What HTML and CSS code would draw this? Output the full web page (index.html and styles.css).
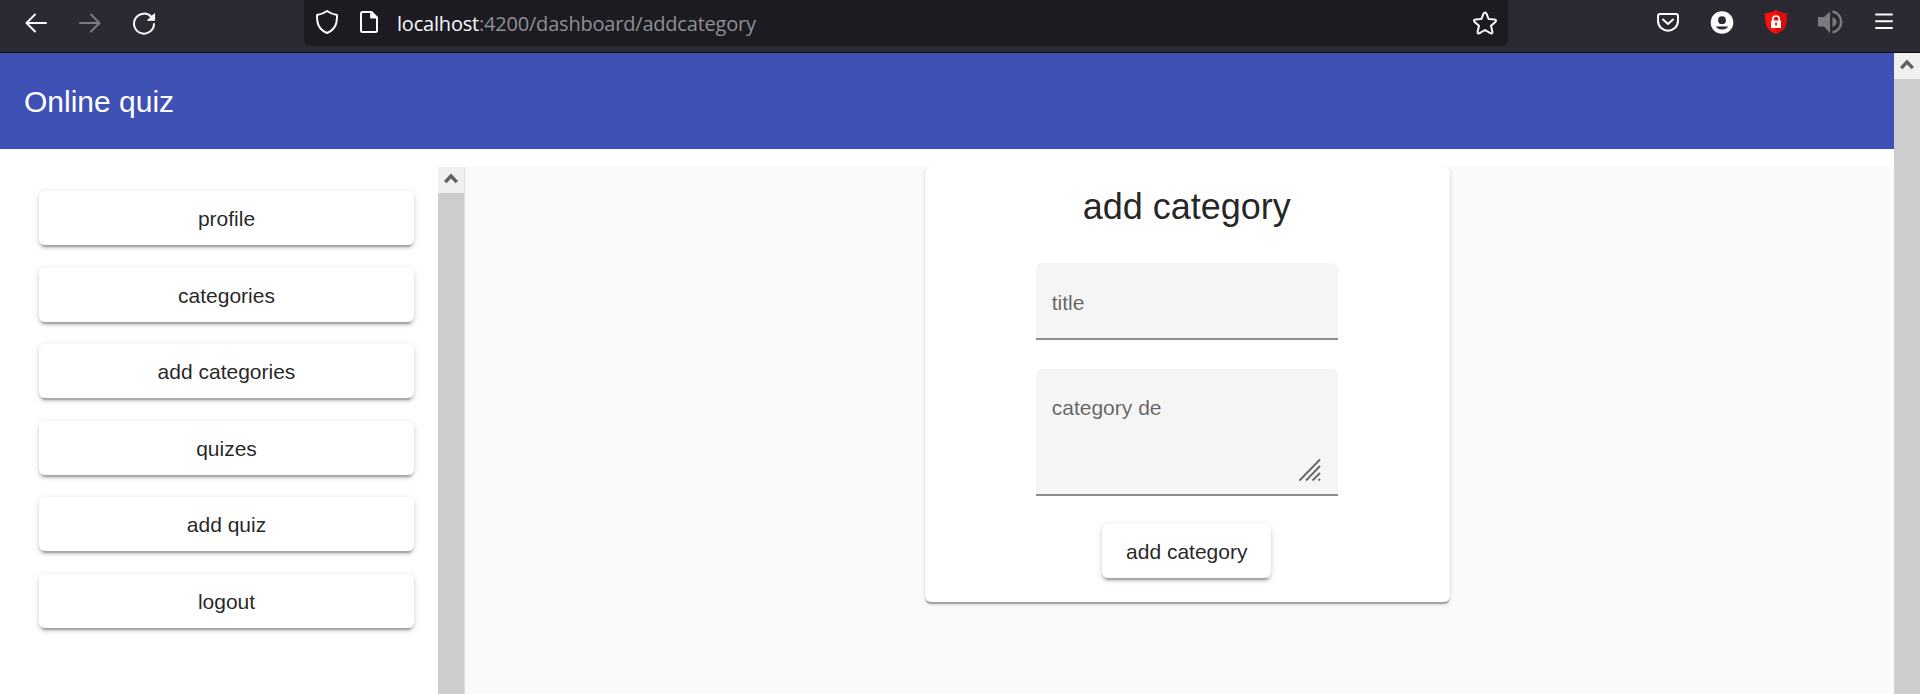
FILE: index.html
```
<!DOCTYPE html>
<html lang="en">
<head>
<meta charset="utf-8">
<title>Online quiz</title>
<link rel="stylesheet" href="styles.css">
</head>
<body>
<div class="browser">
  <div class="nav">
    <svg class="icon" width="24" height="24" viewBox="0 0 24 24"><path d="M22 12H3M11 3.500L2.500 12L11 20.500"/></svg>
    <svg class="icon icon-off" width="24" height="24" viewBox="0 0 24 24"><path d="M2 12H21M13 3.500L21.500 12L13 20.500"/></svg>
    <svg class="icon" width="24" height="24" viewBox="0 0 24 24"><path d="M19.500 6A10 10 0 1 0 22 13"/><path class="solid" d="M22.600 3V9.300H15.800Z"/></svg>
  </div>
  <div class="urlbar">
    <svg class="icon" width="24" height="26" viewBox="0 0 24 26"><path d="M12 2C9 4.200 5.500 5.400 2 6C1.800 14.500 3.500 20 12 24C20.500 20 22.200 14.500 22 6C18.500 5.400 15 4.200 12 2Z"/></svg>
    <svg class="icon" width="20" height="24" viewBox="0 0 20 24"><path d="M12.500 2H3.500Q2 2 2 3.500V20.500Q2 22 3.500 22H16.500Q18 22 18 20.500V7.500Z"/><path class="solid" d="M12 2L18 8H12Z"/></svg>
    <div class="url"><span class="host">localhost</span>:4200/dashboard/addcategory</div>
    <svg class="icon star" width="26" height="26" viewBox="0 0 26 26"><path d="M13 2.500C13.800 2.500 14.200 3 14.500 3.700L16.600 9L22.600 9.400C24.200 9.500 24.500 10.900 23.400 11.900L19 15.800L20.400 21.700C20.700 23.300 19.600 23.900 18.300 23.200L13 20L7.700 23.200C6.400 23.900 5.300 23.300 5.600 21.700L7 15.800L2.600 11.900C1.500 10.900 1.800 9.500 3.400 9.400L9.400 9L11.500 3.700C11.800 3 12.200 2.500 13 2.500Z"/></svg>
  </div>
  <div class="tools">
    <svg class="icon" width="24" height="24" viewBox="0 0 24 24"><path d="M4 4H20Q22 4 22 6V10.500C22 24 2 24 2 10.500V6Q2 4 4 4Z"/><path d="M7 9.500L12 14L17 9.500"/></svg>
    <svg width="24" height="24" viewBox="0 0 24 24"><circle cx="12" cy="12.500" r="11.300" fill="#fbfbfe"/><circle cx="12" cy="10.200" r="3.900" fill="#2b2a33"/><path d="M6 16.500H18C17 20.500 7 20.500 6 16.500Z" fill="#2b2a33"/></svg>
    <svg width="24" height="26" viewBox="0 0 24 26"><path d="M12 0C15 2.200 19 3 23 3.300C23 15 22 20 12 24C2 20 1 15 1 3.300C5 3 9 2.200 12 0Z" fill="#fc1010"/><path d="M12 0C15 2.200 19 3 23 3.300C23 15 22 20 12 24Z" fill="#dd0c0c"/><path d="M8.800 11V9C8.800 5 15.200 5 15.200 9V11" fill="none" stroke="#fff" stroke-width="1.700"/><rect x="7" y="10.500" width="10" height="7.500" rx=".5" fill="#fff"/><path d="M12 12.500V15.500" stroke="#ea1515" stroke-width="1.800"/></svg>
    <svg width="26" height="26" viewBox="0 0 26 26"><path d="M0 7H6L12 1.500V23L6 16.500H0Z" fill="#7b7b7f"/><path d="M14.500 7Q18.500 8.500 18.500 12T14.500 17Z" fill="#7b7b7f"/><path d="M14.500 1.500C26 4 26 20 14.500 22.500" fill="none" stroke="#7b7b7f" stroke-width="2.600"/></svg>
    <svg class="icon" width="20" height="24" viewBox="0 0 20 24"><path d="M2 4.600H18M2 11.300H18M2 17.900H18"/></svg>
  </div>
</div>
<div class="viewport">
  <div class="page">
    <header class="toolbar">Online quiz</header>
    <div class="body">
      <nav class="sidebar">
        <button class="btn">profile</button>
        <button class="btn">categories</button>
        <button class="btn">add categories</button>
        <button class="btn">quizes</button>
        <button class="btn">add quiz</button>
        <button class="btn">logout</button>
      </nav>
      <div class="scrollbar"><div class="scroll-up"><svg width="14" height="11" viewBox="0 0 14 11"><path d="M1.200 9.200L7 3L12.800 9.200" fill="none" stroke="#606060" stroke-width="3.300"/></svg></div></div>
      <main class="content">
        <section class="card">
          <h1 class="title">add category</h1>
          <div class="field">title</div>
          <div class="field field-area">category de
            <svg class="grip" width="24" height="24" viewBox="0 0 24 24"><path d="M1.500 22.500L22 1.500M8 22.500L22 8M14.500 22.500L22 15M20.500 22.500L22 21"/></svg>
          </div>
          <button class="btn">add category</button>
        </section>
      </main>
    </div>
  </div>
  <div class="scrollbar"><div class="scroll-up"><svg width="14" height="11" viewBox="0 0 14 11"><path d="M1.200 9.200L7 3L12.800 9.200" fill="none" stroke="#606060" stroke-width="3.300"/></svg></div></div>
</div>
</body>
</html>
```
FILE: styles.css
```
* { box-sizing: border-box; }
body {
  margin: 0;
  height: 694px;
  overflow: hidden;
  display: flex;
  flex-direction: column;
  font-family: "Liberation Sans", Arial, sans-serif;
  font-size: 21px;
  color: rgba(0, 0, 0, .87);
  background: #fff;
}
svg { display: block; flex: none; }
.browser {
  height: 53px;
  flex: none;
  display: flex;
  background: #2b2a33;
  border-bottom: 1px solid #0c0c0d;
}
.icon { fill: none; stroke: #fbfbfe; stroke-width: 2; stroke-linecap: round; stroke-linejoin: round; }
.icon .solid { fill: #fbfbfe; stroke-width: 1; }
.icon-off { stroke: #7b7b80; }
.nav {
  width: 304px;
  display: flex;
  gap: 30px;
  padding: 11px 0 0 24px;
}
.urlbar {
  width: 1204px;
  height: 46px;
  display: flex;
  align-items: flex-start;
  padding: 9px 10px 0 11px;
  background: #1c1b22;
  border-radius: 0 0 6px 6px;
}
.urlbar .icon + .icon { margin: 1px 0 0 20px; }
.url {
  margin: 1px 0 0 18px;
  font: 20px/28px "Open Sans", "Noto Sans", sans-serif;
  letter-spacing: -.2px;
  color: #8f8f95;
  white-space: nowrap;
}
.host { color: #fbfbfe; }
.urlbar .star { margin: 1px 0 0 auto; }
.tools {
  display: flex;
  align-items: flex-start;
  gap: 30px;
  padding: 10px 0 0 148px;
}
.viewport { flex: 1; min-height: 0; display: flex; }
.page { flex: 1; min-width: 0; display: flex; flex-direction: column; }
.toolbar {
  height: 96px;
  flex: none;
  padding: 1px 0 0 24px;
  background: #3f51b5;
  color: #fff;
  font-size: 30px;
  line-height: 96px;
}
.body { flex: 1; min-height: 0; display: flex; margin-top: 18px; }
.sidebar {
  width: 438px;
  display: flex;
  flex-direction: column;
  gap: 22.6px;
  padding: 24px 24px 0 39px;
}
.btn {
  height: 54px;
  flex: none;
  padding: 2px 24px 0;
  border: 0;
  border-radius: 6px;
  background: #fff;
  color: inherit;
  font: inherit;
  line-height: 52px;
  box-shadow: 0 4.5px 1.5px -3px rgba(0, 0, 0, .2), 0 3px 3px rgba(0, 0, 0, .14), 0 1.5px 7.5px rgba(0, 0, 0, .12);
}
.scrollbar { width: 26px; flex: none; background: #cdcdcd; }
.scroll-up {
  height: 26px;
  display: flex;
  justify-content: center;
  padding-top: 6px;
  background: #f0f0f0;
}
.content {
  flex: 1;
  display: flex;
  justify-content: center;
  align-items: flex-start;
  overflow: hidden;
  background: #fafafa;
  border-left: 1px solid #dedede;
}
.card {
  width: 525px;
  height: 435px;
  margin-left: 16px;
  padding-right: 1.5px;
  display: flex;
  flex-direction: column;
  align-items: center;
  background: #fff;
  border-radius: 6px;
  box-shadow: 0 3px 1.5px -1.5px rgba(0, 0, 0, .2), 0 1.5px 1.5px rgba(0, 0, 0, .14), 0 1.5px 4.5px rgba(0, 0, 0, .12);
}
.title { margin: 16px 0 32px; font-size: 36px; font-weight: 400; line-height: 48px; }
.field {
  position: relative;
  width: 302px;
  height: 77px;
  flex: none;
  padding: 28px 16px 0;
  background: #f5f5f5;
  border-bottom: 2px solid #8c8c8c;
  border-radius: 6px 6px 0 0;
  line-height: 24px;
  color: rgba(0, 0, 0, .6);
}
.field-area { height: 127px; margin: 29px 0 28px; padding-top: 27px; }
.grip {
  position: absolute;
  right: 16px;
  bottom: 12px;
  fill: none;
  stroke: #666;
  stroke-width: 1.8;
}
```
